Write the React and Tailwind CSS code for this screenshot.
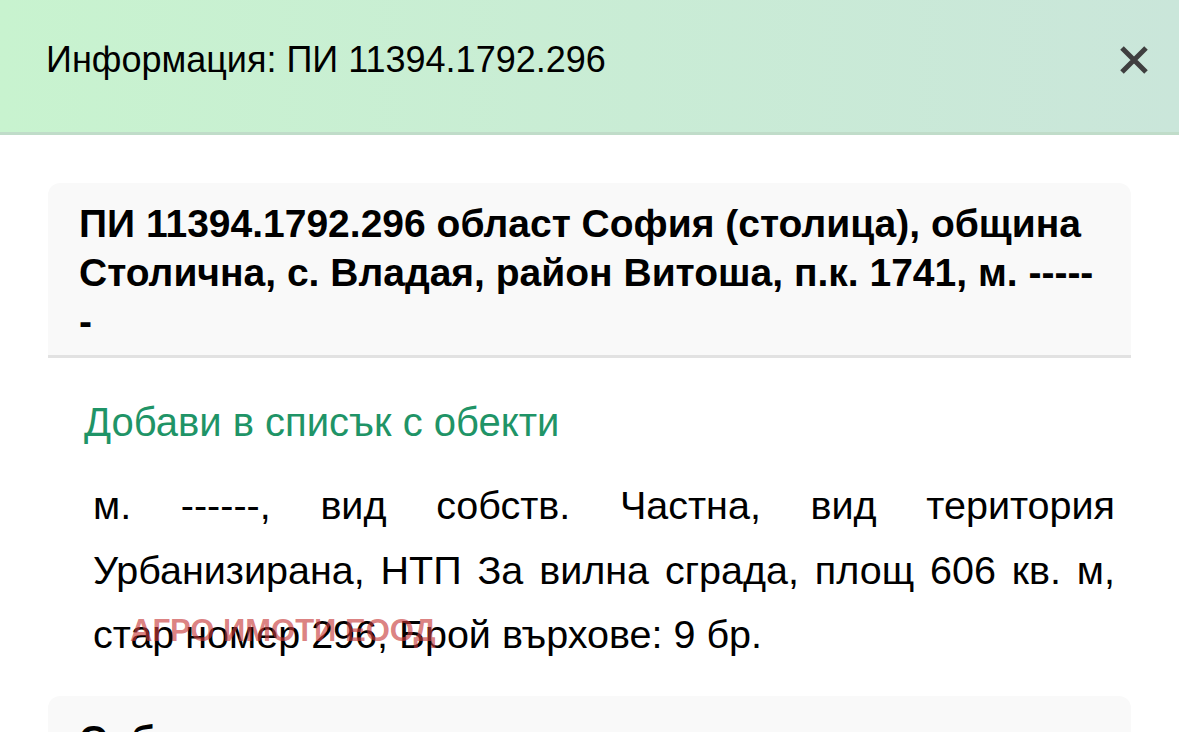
import { useState } from 'react';

const FONT = { fontFamily: '"Liberation Sans", Arial, sans-serif' };

function CloseIcon() {
  return (
    <svg width="34" height="34" viewBox="0 0 34 34" className="text-[#3f3f3f]">
      <path d="M5 5 L29 29 M29 5 L5 29" stroke="currentColor" strokeWidth="5" />
    </svg>
  );
}

export default function App() {
  const [open, setOpen] = useState(true);
  const id = '11394.1792.296';

  return (
    <div className="h-[732px] bg-white text-black overflow-hidden" style={FONT}>
      {open && (
        <>
          <div className="h-[135px] flex items-center justify-between pl-[46px] pr-[28px] pb-[12px] bg-gradient-to-r from-[#c8f3cf] to-[#cae6da] border-b-[3px] border-[#c0dcc9]">
            <h1 className="text-[36px] leading-none">Информация: ПИ {id}</h1>
            <button onClick={() => setOpen(false)} className="p-0">
              <CloseIcon />
            </button>
          </div>

          <div className="px-[48px] pt-[48px]">
            <div className="bg-[#f9f9f9] rounded-t-[12px] border-b-[3px] border-[#e2e2e2] pl-[31px] pr-[35px] pt-[16px] pb-[9px]">
              <h2 className="text-[39px] font-bold leading-[49px]">
                ПИ {id} област София (столица), община Столична, с. Владая, район Витоша, п.к. 1741, м. -----<wbr />-
              </h2>
            </div>

            <div className="pl-[36px] pr-[16px] pt-[37px]">
              <a href="#" className="text-[40px] text-[#1f9467] leading-[54px] block">Добави в списък с обекти</a>

              <div className="relative mt-[24px] pl-[9px]">
                <p className="text-[39.5px] leading-[64.5px] text-justify">
                  м. ------, вид собств. Частна, вид територия Урбанизирана, НТП За вилна сграда, площ 606 кв. м, стар номер 296, Брой върхове: 9 бр.
                </p>
                <span className="absolute left-[46px] top-[142px] text-[31px] font-bold text-[#c83a3a]/65 leading-none pointer-events-none">
                  АГРО ИМОТИ ЕООД
                </span>
              </div>
            </div>

            <div className="mt-[29px] bg-[#f9f9f9] rounded-t-[12px] pl-[31px] pt-[19px] pb-[20px]">
              <h2 className="text-[39px] font-bold leading-[49px]">Собственици</h2>
            </div>
          </div>
        </>
      )}
    </div>
  );
}
